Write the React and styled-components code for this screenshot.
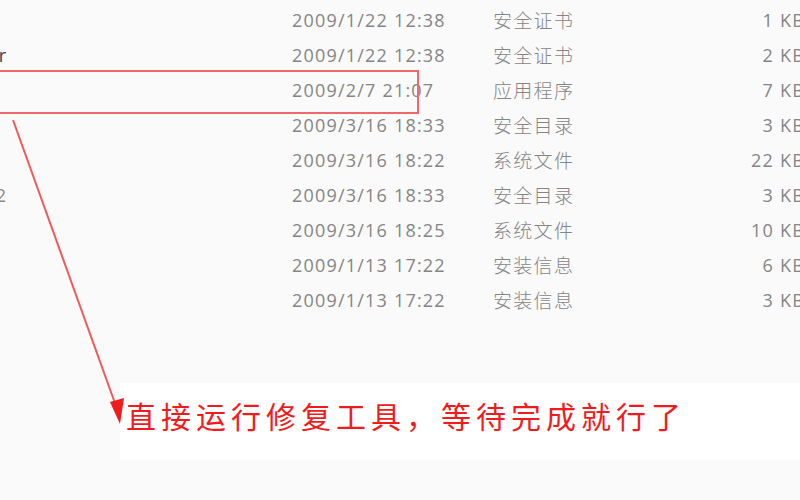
import React from 'react';
import styled, { createGlobalStyle } from 'styled-components';

const GlobalStyle = createGlobalStyle`
  html, body {
    margin: 0;
    padding: 0;
    width: 800px;
    height: 500px;
    overflow: hidden;
    background: #fafafa;
  }
`;

const Page = styled.div`
  position: relative;
  width: 800px;
  height: 500px;
  overflow: hidden;
  background: #fafafa;
`;

//file list
const Table = styled.div`
  display: grid;
  grid-template-columns: 472px 201px 207px 105px;
  grid-auto-rows: 35px;
  margin-left: -180px;
  padding-top: 2px;
  color: #858585;
`;

const Cell = styled.div`
  display: flex;
  align-items: center;
  white-space: nowrap;
  overflow: hidden;
`;

const NameCell = styled(Cell)`
  justify-content: flex-end;
  padding-right: 286px;
  font-family: "Open Sans", "Noto Sans CJK SC", sans-serif;
  font-size: 18px;
  color: ${({ $dim }) => ($dim ? '#8a8a8a' : '#2d3c52')};
`;

const DateCell = styled(Cell)`
  font-family: "Open Sans", "Noto Sans", sans-serif;
  font-size: 18px;
  letter-spacing: 1.2px;
`;

const TypeCell = styled(Cell)`
  font-family: "Noto Sans CJK SC", sans-serif;
  font-size: 19px;
  letter-spacing: 1.3px;
  font-weight: 300;
`;

const SizeCell = styled(Cell)`
  justify-content: flex-end;
  overflow: visible;
  font-family: "Open Sans", "Noto Sans", sans-serif;
  font-size: 18px;
  letter-spacing: 1.2px;
`;

// annotation
const Highlight = styled.div`
  position: absolute;
  left: -10px;
  top: 70px;
  width: 429px;
  height: 44px;
  border: 2px solid #f06868;
  box-sizing: border-box;
  pointer-events: none;
`;

const Arrow = styled.svg`
  position: absolute;
  left: 0;
  top: 0;
  width: 800px;
  height: 500px;
  pointer-events: none;
`;

const Callout = styled.div`
  display: flex;
  align-items: center;
  margin: 66px 0 0 120px;
  height: 77px;
  padding-left: 6px;
  background: #ffffff;
`;

const CalloutText = styled.span`
  font-family: "Noto Sans CJK SC", sans-serif;
  font-size: 30px;
  font-weight: 400;
  letter-spacing: 5px;
  color: #f01c1c;
  margin-top: -14px;
`;

const rows = [
  { name: '', date: '2009/1/22 12:38', type: '安全证书', size: '1 KB' },
  { name: 'Fixer', date: '2009/1/22 12:38', type: '安全证书', size: '2 KB' },
  { name: '', date: '2009/2/7 21:07', type: '应用程序', size: '7 KB' },
  { name: '', date: '2009/3/16 18:33', type: '安全目录', size: '3 KB' },
  { name: '', date: '2009/3/16 18:22', type: '系统文件', size: '22 KB' },
  { name: 'x2', date: '2009/3/16 18:33', type: '安全目录', size: '3 KB', dim: true },
  { name: '', date: '2009/3/16 18:25', type: '系统文件', size: '10 KB' },
  { name: '', date: '2009/1/13 17:22', type: '安装信息', size: '6 KB' },
  { name: '', date: '2009/1/13 17:22', type: '安装信息', size: '3 KB' },
];

const App = () => {
  return (
    <Page>
      <GlobalStyle />
      <Table>
        {rows.map((row, index) => (
          <React.Fragment key={index}>
            <NameCell $dim={row.dim}>{row.name}</NameCell>
            <DateCell>{row.date}</DateCell>
            <TypeCell>{row.type}</TypeCell>
            <SizeCell>{row.size}</SizeCell>
          </React.Fragment>
        ))}
      </Table>

      <Callout>
        <CalloutText>直接运行修复工具，等待完成就行了</CalloutText>
      </Callout>

      <Highlight />
      <Arrow viewBox="0 0 800 500">
        <line x1="13" y1="120" x2="116" y2="406" stroke="#f05a5a" strokeWidth="2" />
        <polygon points="110,402 124,398 120,424" fill="#f01c1c" />
      </Arrow>
    </Page>
  );
};

export default App;
